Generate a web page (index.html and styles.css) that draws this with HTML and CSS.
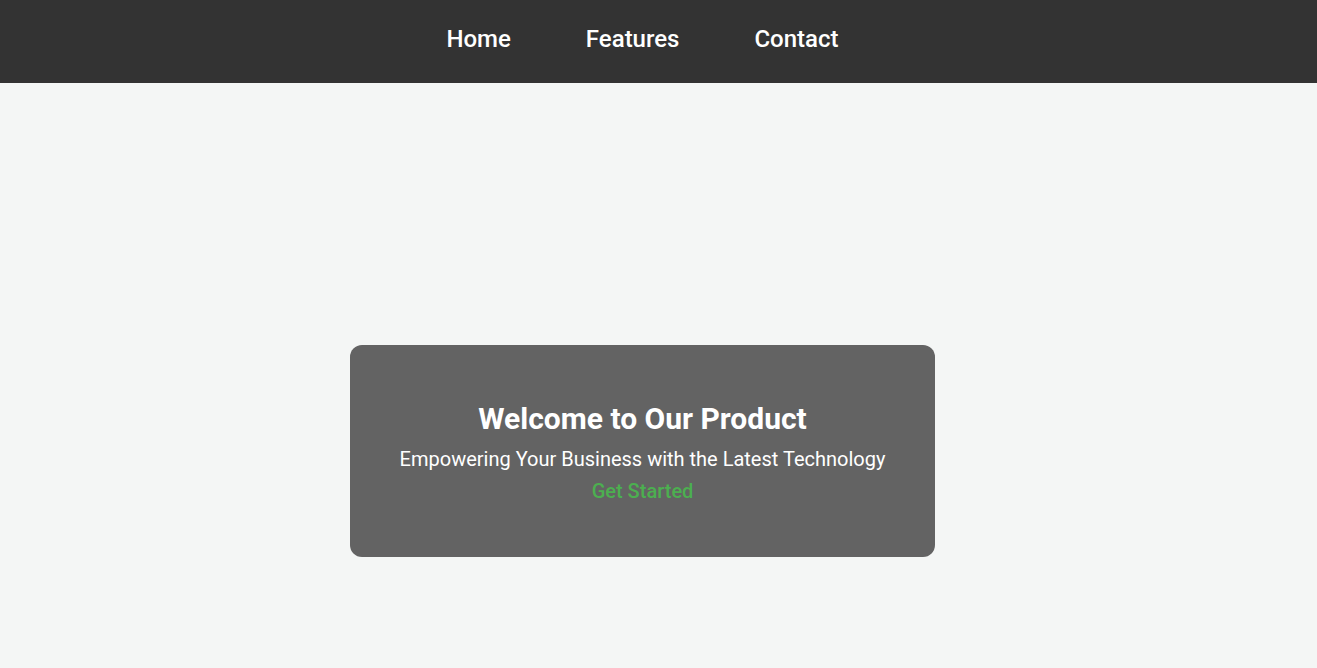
FILE: index.html
```html
<!DOCTYPE html>
<html lang="en">
<head>
<meta charset="utf-8">
<title>Our Product</title>
<link rel="stylesheet" href="styles.css">
</head>
<body>
<header class="topbar">
  <nav class="nav">
    <a class="nav-link" href="#">Home</a>
    <a class="nav-link" href="#">Features</a>
    <a class="nav-link" href="#">Contact</a>
  </nav>
</header>
<main class="main">
  <section class="hero">
    <h1 class="hero-title">Welcome to Our Product</h1>
    <p class="hero-sub">Empowering Your Business with the Latest Technology</p>
    <a class="hero-cta" href="#">Get Started</a>
  </section>
</main>
</body>
</html>
```

FILE: styles.css
```css
html, body {
  margin: 0;
  padding: 0;
}
body {
  background: #f4f6f5;
  font-family: Roboto, "Liberation Sans", sans-serif;
  height: 668px;
  overflow: hidden;
}
.topbar {
  background: #333333;
  height: 83px;
  display: flex;
  align-items: center;
  justify-content: center;
  padding-right: 32px;
}
.nav {
  display: flex;
  gap: 75px;
  padding-bottom: 6px;
}
.nav-link {
  color: #ffffff;
  text-decoration: none;
  font-size: 24px;
  font-weight: 500;
}
.main {
  display: flex;
  justify-content: center;
  padding-top: 262px;
  padding-right: 32px;
}
.hero {
  width: 585px;
  height: 212px;
  box-sizing: border-box;
  padding-top: 4px;
  background: #636363;
  border-radius: 12px;
  display: flex;
  flex-direction: column;
  align-items: center;
  justify-content: center;
  color: #ffffff;
  text-align: center;
}
.hero-title {
  margin: 0;
  font-size: 30px;
  font-weight: 700;
  line-height: 36px;
}
.hero-sub {
  margin: 8px 0 0;
  font-size: 20px;
  line-height: 28px;
}
.hero-cta {
  color: #4caf50;
  text-decoration: none;
  font-size: 20px;
  font-weight: 500;
  line-height: 28px;
  margin-top: 4px;
}
```
